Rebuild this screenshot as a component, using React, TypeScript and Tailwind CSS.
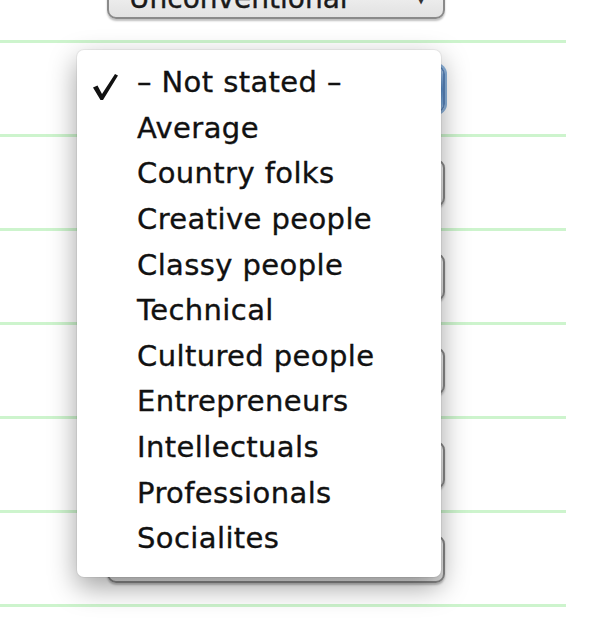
const rows = ["Unconventional", "", "", "", "", "", ""]

const options = [
  "– Not stated –",
  "Average",
  "Country folks",
  "Creative people",
  "Classy people",
  "Technical",
  "Cultured people",
  "Entrepreneurs",
  "Intellectuals",
  "Professionals",
  "Socialites",
]

function Select({ label, focused }: { label: string; focused?: boolean }) {
  return (
    <div
      className={`flex h-[48px] w-[338px] items-center justify-between overflow-hidden rounded-[9px] border-2 pl-5 ${
        focused
          ? "border-[#5a86bd] bg-gradient-to-b from-[#fbfbfb] to-[#e6e6e6] shadow-[0_0_0_2px_#8cb4de]"
          : "border-[#8a8a8a] bg-gradient-to-b from-[#fbfbfb] to-[#e2e2e2] shadow-[0_2px_2px_rgba(0,0,0,0.25)]"
      }`}
    >
      <span className="pt-[8px] text-[28px] leading-none text-[#1a1a1a] [-webkit-text-stroke:0.4px_#1a1a1a]">{label}</span>
      <span
        className={`flex h-full w-[44px] items-center justify-center pt-[8px] text-[13px] text-[#333] ${
          focused ? "bg-gradient-to-b from-[#a9c9ec] via-[#5f95d2] to-[#8fbbe9]" : ""
        }`}
      >
        {label ? "▼" : ""}
      </span>
    </div>
  )
}

function Check() {
  return (
    <svg width="27" height="28" viewBox="0 0 27 28" className="absolute left-[92px] top-[73px]">
      <path d="M1 14.5 L5.5 12.5 L10 21 L23 1 L26 2.5 L11 27 L8.5 27 Z" fill="#111" />
    </svg>
  )
}

export default function App() {
  return (
    <div className="relative h-[637px] w-[600px] overflow-hidden bg-white" style={{ fontFamily: '"DejaVu Sans", Verdana, sans-serif' }}>
      <div className="-mt-[51px] w-[566px]">
        {rows.map((label, i) => (
          <div key={i}>
            <div className="flex h-[91px] items-center pl-[107px]">
              <Select label={label} focused={i === 1} />
            </div>
            <div className="h-[3px] bg-[#cdf4cd]" />
          </div>
        ))}
      </div>

      <div className="absolute left-[77px] top-[50px] w-[364px] rounded-[7px] bg-white pb-[15px] pt-[10px] shadow-[0_10px_28px_rgba(0,0,0,0.38)] ring-1 ring-black/5">
        {options.map((opt) => (
          <div
            key={opt}
            className="flex h-[45.6px] items-center pl-[60px] text-[29px] leading-none tracking-[0.4px] text-[#111] [-webkit-text-stroke:0.35px_#111]"
          >
            {opt}
          </div>
        ))}
      </div>
      <Check />
    </div>
  )
}
